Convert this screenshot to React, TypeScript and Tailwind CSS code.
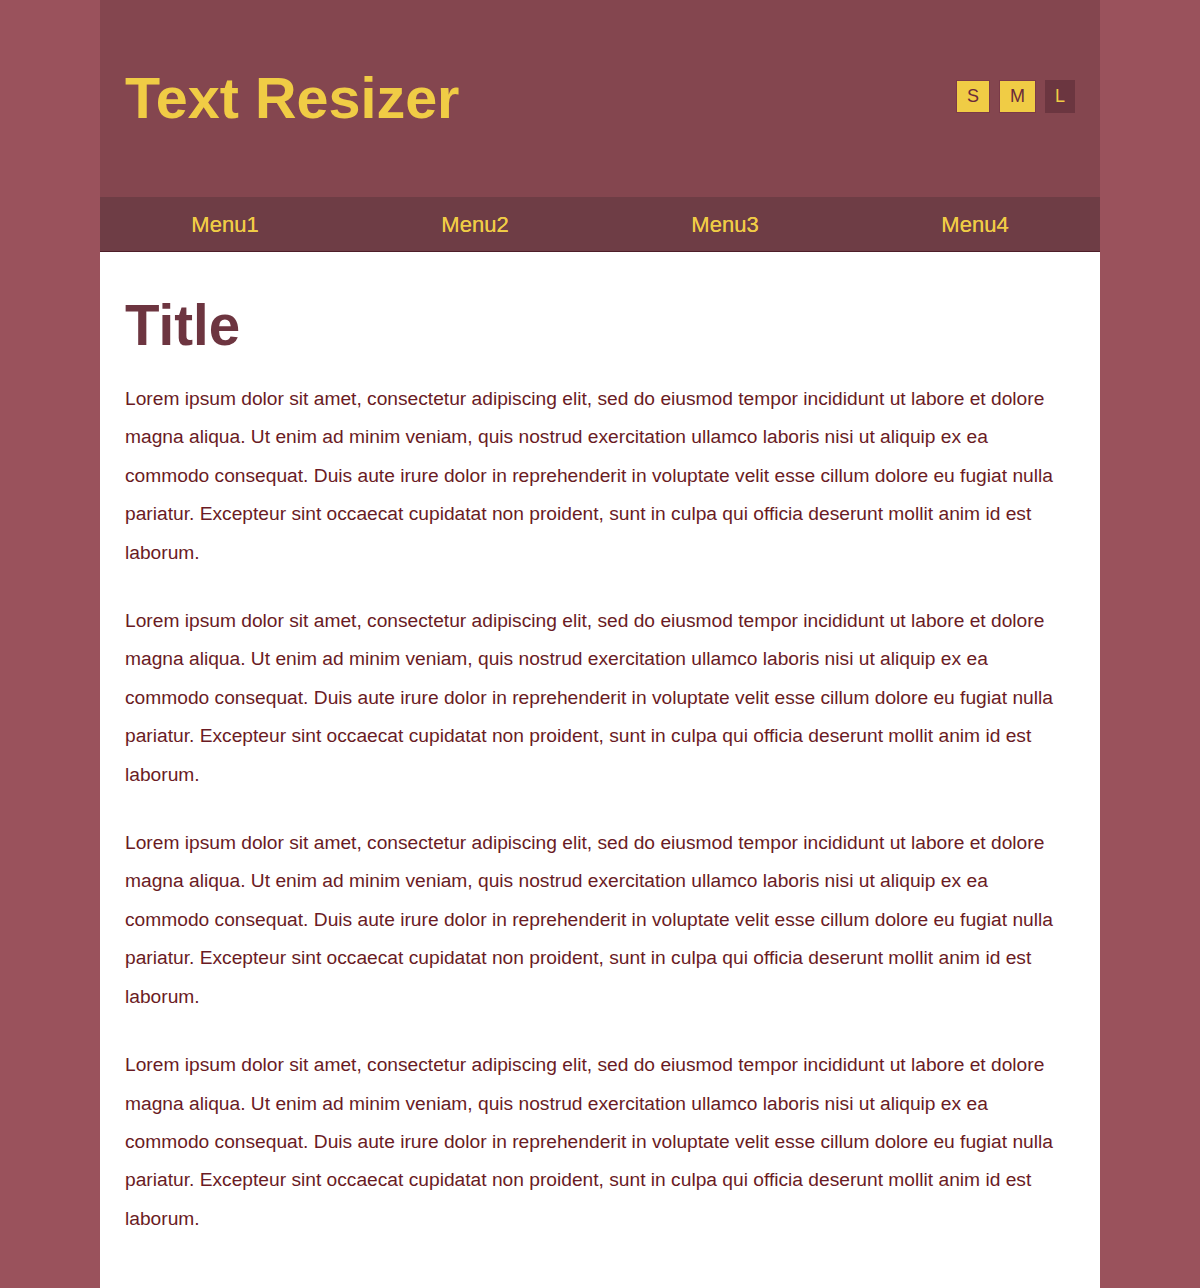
const lorem =
  'Lorem ipsum dolor sit amet, consectetur adipiscing elit, sed do eiusmod tempor incididunt ut labore et dolore magna aliqua. Ut enim ad minim veniam, quis nostrud exercitation ullamco laboris nisi ut aliquip ex ea commodo consequat. Duis aute irure dolor in reprehenderit in voluptate velit esse cillum dolore eu fugiat nulla pariatur. Excepteur sint occaecat cupidatat non proident, sunt in culpa qui officia deserunt mollit anim id est laborum.'

const menus = ['Menu1', 'Menu2', 'Menu3', 'Menu4']

export default function App() {
  return (
    <div className="min-h-[1288px] bg-[#9a525c] font-['Liberation_Sans',Arial,sans-serif]">
      <div className="mx-auto min-h-[1288px] w-[1000px] bg-white">
        <header className="flex h-[197px] items-center justify-between bg-[#84464f] px-[25px]">
          <h1 className="text-[57.5px] leading-none font-bold text-[#f0cc45]">Text Resizer</h1>
          <div className="-mt-[4px] flex items-center gap-[9px] text-[18px]">
            <button className="flex h-[33px] items-center border border-[#7a3a48] bg-[#f0cc45] px-[10px] text-[#6a2a3a]">S</button>
            <button className="flex h-[33px] items-center border border-[#7a3a48] bg-[#f0cc45] px-[10px] text-[#6a2a3a]">M</button>
            <button className="flex h-[33px] items-center bg-[#6b3640] px-[10px] text-[#f0cc45]">L</button>
          </div>
        </header>
        <nav className="grid h-[55px] grid-cols-4 border-b border-[#4e1e28] bg-[#6e3d45]">
          {menus.map((m) => (
            <a key={m} className="flex items-center justify-center text-[22px] text-[#f0cc45] [text-shadow:0_0_0.4px_#f0cc45]">
              {m}
            </a>
          ))}
        </nav>
        <main className="px-[25px] pt-[40px] pb-[21px]">
          <h2 className="mb-[21px] text-[56.5px] leading-[67px] font-bold text-[#6d3540]">Title</h2>
          {[0, 1, 2, 3].map((i) => (
            <p key={i} className="mb-[30px] text-[19.2px] leading-[2] text-[#6a1b24]">
              {lorem}
            </p>
          ))}
        </main>
      </div>
    </div>
  )
}
